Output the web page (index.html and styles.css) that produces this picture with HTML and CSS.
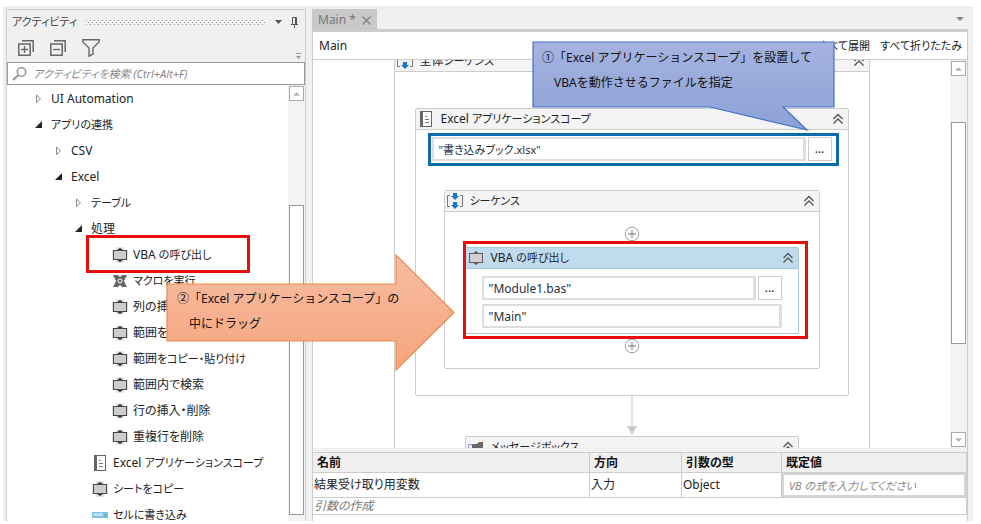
FILE: index.html
```html
<!DOCTYPE html>
<html lang="ja">
<head>
<meta charset="UTF-8">
<meta name="viewport" content="width=device-width, initial-scale=1.0">
<title>Main</title>
<link rel="stylesheet" href="styles.css">
</head>
<body>
<!-- アイコン -->
<svg class="defs" width="0" height="0" aria-hidden="true">
<symbol id="i-activity" viewBox="0 0 16 16">
<path d="M4 0h8v3h4v10h-4v3H4v-3H0V3h4z" fill="#e2e2e2"/>
<path d="M5 3L8 1l3 2zM5 13l3 2 3-2z" fill="#333"/>
<rect x="1.500" y="3.500" width="13" height="9" fill="#cdcdcd" stroke="#484848"/>
</symbol>
<symbol id="i-activity-line" viewBox="0 0 16 16">
<path d="M5.500 3L8 1l2.500 2zM5.500 13L8 15l2.500-2z" fill="#555"/>
<rect x="1.500" y="3.500" width="13" height="9" fill="#d3ccd0" stroke="#665a5e"/>
</symbol>
<symbol id="i-macro" viewBox="0 0 16 16">
<path d="M1 2h5l2 2 2-2h5l-3 6 3 6h-5l-2-2-2 2H1l3-6z" fill="#666"/>
<circle cx="8" cy="8" r="2" fill="#666" stroke="#fff"/>
</symbol>
<symbol id="i-book" viewBox="0 0 16 16">
<rect x="2.500" y=".5" width="11" height="15" fill="#fff" stroke="#666"/>
<path d="M2 0h3v16H2z" fill="#666"/>
<path d="M7 5.500h2M7 8.500h4M7 11.500h4" stroke="#777"/>
</symbol>
<symbol id="i-cell" viewBox="0 0 16 16">
<path d="M0 5h16v6H0z" fill="#7fc0e0"/>
<path d="M1 6h10v3H1z" fill="#b5e0f2"/>
<path d="M13 7v3" stroke="#5299bd"/>
</symbol>
<symbol id="i-sequence" viewBox="0 0 16 16">
<path d="M3 2.500H.5v11H3M13 2.500h2.500v11H13" fill="none" stroke="#777"/>
<path d="M6 0h4v3h2L8 7 4 3h2zM6 9h4v3h2l-4 4-4-4h2z" fill="#1c75c9"/>
</symbol>
<symbol id="i-message" viewBox="0 0 16 16">
<path d="M.5 5.500h6v7h-6z" fill="#e8edff" stroke="#8c9bd0"/>
<path d="M9 5l2-2h4v4z" fill="#c84863"/>
<path d="M4 5h5l1-1h5v10H4z" fill="#686868"/>
</symbol>
<symbol id="i-up" viewBox="0 0 12 12">
<path d="M1.500 6L6 1.500 10.500 6M1.500 10.500L6 6l4.500 4.500" fill="none" stroke="#555" stroke-width="1.400"/>
</symbol>
<symbol id="i-plus" viewBox="0 0 16 16">
<circle cx="8" cy="8" r="6.800" fill="#fff" stroke="#999"/>
<path d="M8 4v8M4 8h8" stroke="#999" stroke-width="1.300"/>
</symbol>
<symbol id="i-open" viewBox="0 0 8 8"><path d="M7 0v7H0z" fill="#222"/></symbol>
<symbol id="i-closed" viewBox="0 0 8 10"><path d="M1.500 1v7.500L5.500 4.800z" fill="#fff" stroke="#888"/></symbol>
<symbol id="i-tri-up" viewBox="0 0 8 4"><path d="M0 4l4-4 4 4z" fill="#aaa"/></symbol>
<symbol id="i-tri-down" viewBox="0 0 8 4"><path d="M0 0h8L4 4z" fill="#aaa"/></symbol>
</svg>

<div class="app">
<aside class="panel">
<div class="panel-title">
<span class="kana">アクティビティ</span>
<svg class="grip" height="5" aria-hidden="true">
<pattern id="dots" width="4" height="4" patternUnits="userSpaceOnUse"><path d="M0 0h1v1H0zM2 2h1v1H2z" fill="#999"/></pattern>
<rect width="100%" height="5" fill="url(#dots)"/>
</svg>
<button class="icon-btn" aria-label="メニュー"><svg width="7" height="4"><path d="M0 0h7L3.500 4z" fill="#555"/></svg></button>
<button class="icon-btn" aria-label="固定"><svg width="7" height="11"><path d="M1.500 7V.5h4V7M0 7.500h7M3.500 8v3M4.500 1v6" fill="none" stroke="#555"/></svg></button>
</div>
<div class="toolbar">
<button class="icon-btn" aria-label="すべて展開"><svg width="16" height="16"><path d="M4 .8h11.200V12M.8 4h11.400v11.200H.8z" fill="none" stroke="#666" stroke-width="1.500"/><path d="M3 9.500h7M6.500 6v7" stroke="#666" stroke-width="1.300"/></svg></button>
<button class="icon-btn" aria-label="すべて折りたたみ"><svg width="16" height="16"><path d="M4 .8h11.200V12M.8 4h11.400v11.200H.8z" fill="none" stroke="#666" stroke-width="1.500"/><path d="M3 9.500h7" stroke="#666" stroke-width="1.300"/></svg></button>
<button class="icon-btn" aria-label="フィルター"><svg width="18" height="18"><path d="M.8.8h16.400v2L11 9v6l-4 2.200V9L.8 2.800z" fill="none" stroke="#666" stroke-width="1.400"/></svg></button>
<button class="icon-btn overflow" aria-label="その他"><svg width="5" height="6"><path d="M0 .5h5" stroke="#999"/><path d="M0 3h5L2.500 6z" fill="#999"/></svg></button>
</div>
<label class="search">
<svg width="15" height="14"><circle cx="9.500" cy="5" r="4.200" fill="#fff" stroke="#999" stroke-width="1.600"/><path d="M6.500 8L1 13" stroke="#999" stroke-width="2.200"/></svg>
<input type="text" placeholder="アクティビティを検索 (Ctrl+Alt+F)" aria-label="アクティビティを検索">
</label>
<div class="tree-area">
<ul class="tree">
<li><div class="node"><button class="toggle" aria-label="展開"><svg width="8" height="10"><use href="#i-closed"/></svg></button>UI Automation</div></li>
<li><div class="node"><button class="toggle" aria-label="折りたたみ"><svg width="8" height="8"><use href="#i-open"/></svg></button><span class="kana">アプリの連携</span></div>
<ul>
<li><div class="node"><button class="toggle" aria-label="展開"><svg width="8" height="10"><use href="#i-closed"/></svg></button>CSV</div></li>
<li><div class="node"><button class="toggle" aria-label="折りたたみ"><svg width="8" height="8"><use href="#i-open"/></svg></button>Excel</div>
<ul>
<li><div class="node"><button class="toggle" aria-label="展開"><svg width="8" height="10"><use href="#i-closed"/></svg></button><span class="kana">テーブル</span></div></li>
<li><div class="node"><button class="toggle" aria-label="折りたたみ"><svg width="8" height="8"><use href="#i-open"/></svg></button>処理</div>
<ul>
<li><div class="node leaf"><svg class="icon"><use href="#i-activity"/></svg><span>VBA <span class="kana">の呼び出し</span></span></div></li>
<li><div class="node leaf"><svg class="icon"><use href="#i-macro"/></svg><span class="kana">マクロを実行</span></div></li>
<li><div class="node leaf"><svg class="icon"><use href="#i-activity"/></svg>列の挿入・削除</div></li>
<li><div class="node leaf"><svg class="icon"><use href="#i-activity"/></svg>範囲をクリア</div></li>
<li><div class="node leaf"><svg class="icon"><use href="#i-activity"/></svg><span>範囲<span class="kana">をコピー・貼り付け</span></span></div></li>
<li><div class="node leaf"><svg class="icon"><use href="#i-activity"/></svg>範囲内で検索</div></li>
<li><div class="node leaf"><svg class="icon"><use href="#i-activity"/></svg>行の挿入・削除</div></li>
<li><div class="node leaf"><svg class="icon"><use href="#i-activity"/></svg>重複行を削除</div></li>
</ul>
</li>
<li><div class="node leaf"><svg class="icon"><use href="#i-book"/></svg><span>Excel <span class="kana">アプリケーションスコープ</span></span></div></li>
<li><div class="node leaf"><svg class="icon"><use href="#i-activity"/></svg><span class="kana">シートをコピー</span></div></li>
<li><div class="node leaf"><svg class="icon"><use href="#i-cell"/></svg><span class="kana">セルに書き込み</span></div></li>
</ul>
</li>
</ul>
</li>
</ul>
<div class="scrollbar tree-scroll">
<button aria-label="上へ"><svg width="7" height="4" viewBox="0 0 8 4"><use href="#i-tri-up"/></svg></button>
<div class="thumb"></div>
</div>
</div>
</aside>

<main class="doc">
<div class="tabs">
<div class="tab">Main * <button class="icon-btn" aria-label="閉じる"><svg width="9" height="9"><path d="M.5.5l8 8M8.500.5l-8 8" stroke="#888" stroke-width="1.500"/></svg></button></div>
<button class="icon-btn" aria-label="タブ一覧"><svg width="8" height="4"><path d="M0 0h8L4 4z" fill="#888"/></svg></button>
</div>
<div class="doc-body">
<div class="crumbs">
<a href="#">Main</a>
<div class="crumb-links kana"><a href="#">すべて展開</a><a href="#">すべて折りたたみ</a></div>
</div>
<div class="canvas">
<div class="flow">
<section class="card outer">
<header><svg class="icon"><use href="#i-sequence"/></svg><span class="name">全体<span class="kana">シーケンス</span></span><button class="icon-btn" aria-label="折りたたみ"><svg width="12" height="12"><use href="#i-up"/></svg></button></header>
<section class="card scope">
<header><svg class="icon"><use href="#i-book"/></svg><span class="name">Excel <span class="kana">アプリケーションスコープ</span></span><button class="icon-btn" aria-label="折りたたみ"><svg width="12" height="12"><use href="#i-up"/></svg></button></header>
<div class="file-row">
<input class="expr kana" type="text" value="&quot;書き込みブック.xlsx&quot;" aria-label="ブックのパス">
<button class="browse">...</button>
</div>
<section class="card sequence">
<header><svg class="icon"><use href="#i-sequence"/></svg><span class="name kana">シーケンス</span><button class="icon-btn" aria-label="折りたたみ"><svg width="12" height="12"><use href="#i-up"/></svg></button></header>
<button class="icon-btn add" aria-label="追加"><svg width="16" height="16"><use href="#i-plus"/></svg></button>
<section class="card vba">
<header><svg class="icon"><use href="#i-activity-line"/></svg><span class="name">VBA <span class="kana">の呼び出し</span></span><button class="icon-btn" aria-label="折りたたみ"><svg width="12" height="12"><use href="#i-up"/></svg></button></header>
<div class="fields">
<div class="field-row">
<input class="expr" type="text" value="&quot;Module1.bas&quot;" aria-label="コードファイル">
<button class="browse">...</button>
</div>
<div class="field-row">
<input class="expr" type="text" value="&quot;Main&quot;" aria-label="エントリーメソッド">
</div>
</div>
<div class="mark mark-vba"></div>
</section>
<button class="icon-btn add" aria-label="追加"><svg width="16" height="16"><use href="#i-plus"/></svg></button>
</section>
</section>
<svg class="connector" width="10" height="40"><path d="M5 0v32" stroke="#e2e2e2" stroke-width="2"/><path d="M0 30h10L5 39z" fill="#ccc"/></svg>
<section class="card message">
<header><svg class="icon"><use href="#i-message"/></svg><span class="name kana">メッセージボックス</span><button class="icon-btn" aria-label="折りたたみ"><svg width="12" height="12"><use href="#i-up"/></svg></button></header>
</section>
</section>
</div>
<div class="scrollbar canvas-scroll">
<button aria-label="上へ"><svg width="7" height="4" viewBox="0 0 8 4"><use href="#i-tri-up"/></svg></button>
<div class="thumb"></div>
<button aria-label="下へ"><svg width="7" height="4" viewBox="0 0 8 4"><use href="#i-tri-down"/></svg></button>
</div>
</div>
<div class="arguments">
<table>
<thead>
<tr><th>名前</th><th class="col-dir">方向</th><th class="col-type">引数の型</th><th class="col-value">既定値</th></tr>
</thead>
<tbody>
<tr><td>結果受け取り用変数</td><td>入力</td><td>Object</td><td class="value"><input class="kana" type="text" placeholder="VB の式を入力してください" aria-label="既定値"></td></tr>
<tr class="create"><td colspan="4">引数の作成</td></tr>
</tbody>
</table>
</div>
</div>
</main>

<!-- 説明用の枠と吹き出し -->
<div class="mark mark-item"></div>
<div class="callout callout-file">
<svg width="304" height="92" viewBox="0 0 304 92">
<linearGradient id="blue" x2="0" y2="1"><stop offset="0" stop-color="#a5b3df"/><stop offset="1" stop-color="#8ca1d7"/></linearGradient>
<path d="M1 1h301v65h-51l24 23-97-23H1z" fill="url(#blue)" stroke="#4472c4" stroke-width="1.200"/>
</svg>
<p>①「Excel アプリケーションスコープ」を設置して<br><span>VBAを動作させるファイルを指定</span></p>
</div>
<div class="callout callout-drag">
<svg width="290" height="118" viewBox="0 0 290 118">
<linearGradient id="orange" x2="0" y2="1"><stop offset="0" stop-color="#f7bda4"/><stop offset="1" stop-color="#f6a47c"/></linearGradient>
<path d="M1 30h229V1l58 57.500L230 116V87H1z" fill="url(#orange)" stroke="#ed8b4a" stroke-width="1.200"/>
</svg>
<p>②「Excel アプリケーションスコープ」の<br><span>中にドラッグ</span></p>
</div>
</div>
</body>
</html>
```
FILE: styles.css
```css
* {
box-sizing: border-box;
}

body {
margin: 0;
background: #fff;
color: #222;
font-family: "Noto Sans", "Noto Sans CJK JP", sans-serif;
font-size: 12px;
line-height: 20px;
font-feature-settings: "palt";
}

ul {
list-style: none;
margin: 0;
padding: 0;
}

a {
color: inherit;
text-decoration: none;
}

button,
input {
font: inherit;
font-feature-settings: inherit;
color: inherit;
}

.defs {
position: absolute;
}

svg {
display: block;
flex: none;
}

.icon {
width: 16px;
height: 16px;
}

.icon-btn {
display: flex;
flex: none;
border: 0;
padding: 0;
background: none;
}

.app {
position: relative;
display: flex;
gap: 6px;
height: calc(100vh - 9px);
min-height: 500px;
margin: 6px 8px 3px 3px;
padding: 3px 5px 0 3px;
background: #f0f0f0;
}

/* アクティビティパネル */
.panel {
display: flex;
flex-direction: column;
flex: none;
width: 300px;
border: 1px solid #ccc;
border-bottom: 0;
}

.panel-title {
display: flex;
align-items: center;
gap: 9px;
height: 24px;
padding: 0 7px 0 5px;
color: #444;
}

.grip {
flex: 1;
width: 0;
}

.toolbar {
display: flex;
align-items: center;
gap: 16px;
height: 28px;
padding: 0 4px 0 11px;
}

.toolbar .overflow {
margin-left: auto;
align-self: flex-end;
margin-bottom: 3px;
}

.search {
display: flex;
align-items: center;
gap: 6px;
height: 23px;
padding-left: 4px;
border: 1px solid #999;
background: #fff;
}

.search input {
flex: 1;
min-width: 0;
height: 20px;
padding: 0;
border: 0;
outline: 0;
font-size: 11px;
}

input::placeholder {
color: #888;
font-style: italic;
}

.tree-area {
display: flex;
flex: 1;
min-height: 0;
background: #fff;
}

.tree {
flex: 1;
padding: 1px 0 0 28px;
overflow: hidden;
white-space: nowrap;
}

.tree ul {
padding-left: 20px;
}

.node {
display: flex;
align-items: center;
height: 26px;
}

.toggle {
width: 16px;
padding: 0;
border: 0;
background: none;
}

.leaf {
gap: 5px;
padding-left: 17px;
}

.scrollbar {
display: flex;
flex-direction: column;
flex: none;
width: 17px;
padding: 1px;
background: #f3f3f3;
}

.scrollbar button {
display: flex;
align-items: center;
justify-content: center;
width: 15px;
height: 15px;
padding: 0;
border: 1px solid #aaa;
background: #fff;
}

.thumb {
flex: 1;
width: 15px;
border: 1px solid #999;
background: #fff;
}

.tree-scroll .thumb {
margin: 104px 0 5px;
}

.canvas-scroll .thumb {
margin: 46px 0 88px;
}

/* ドキュメント */
.doc {
display: flex;
flex-direction: column;
flex: 1;
min-width: 0;
}

.tabs {
display: flex;
align-items: center;
justify-content: space-between;
height: 23px;
padding-right: 4px;
border-bottom: 3px solid #ccc;
}

.tab {
display: flex;
align-items: center;
gap: 6px;
height: 20px;
padding: 2px 6px 0 6px;
background: #c9c9c9;
color: #777;
}

.doc-body {
display: flex;
flex-direction: column;
flex: 1;
min-height: 0;
border: solid #ccc;
border-width: 0 1px;
background: #fff;
}

.crumbs {
display: flex;
align-items: center;
justify-content: space-between;
height: 28px;
padding: 0 5px 0 6px;
border-bottom: 1px solid #ccc;
}

.crumb-links {
display: flex;
gap: 10px;
}

.canvas {
display: flex;
flex: 1;
min-height: 0;
overflow: hidden;
}

.flow {
flex: 1;
overflow: hidden;
}

.card {
position: relative;
border: 1px solid #ccc;
border-radius: 2px;
background: #fff;
}

.card > header {
display: flex;
align-items: center;
height: 21px;
padding: 0 4px 0 2px;
border-bottom: 1px solid #ccc;
background: #f4f4f4;
}

.name {
flex: 1;
margin-left: 7px;
}

.outer {
max-width: 476px;
height: 600px;
margin: -10px auto 0;
}

.scope {
margin: 36px 20px 0;
padding-bottom: 26px;
}

.file-row {
display: flex;
gap: 2px;
margin: 3px 9px 0 12px;
padding: 1px 4px 2px 1px;
border: 3px solid #0d6cb0;
}

.expr {
flex: 1;
min-width: 0;
height: 24px;
padding: 0 5px;
border: 2px solid #ddd;
border-right-width: 3px;
background: #fff;
color: #1f2f40;
}

.browse {
width: 24px;
height: 24px;
padding: 0;
border: 1px solid #ccc;
background: #fff;
}

.sequence {
margin: 24px 28px 0;
padding-bottom: 14px;
}

.add {
width: 16px;
margin: 14px auto 5px;
}

.vba {
margin: 0 20px;
border-color: #a9c8dc;
}

.vba > header {
background: #c1dbee;
border-color: #a9c8dc;
}

.fields {
display: flex;
flex-direction: column;
gap: 4px;
padding: 7px 16px 5px 16px;
}

.field-row {
display: flex;
gap: 2px;
}

.vba + .add {
margin: 4px auto 0;
}

.connector {
margin: 0 auto;
}

.message {
margin: 0 70px;
}

/* 引数 */
.arguments {
flex: none;
height: 73px;
border-top: 4px solid #f0f0f0;
}

table {
width: 100%;
table-layout: fixed;
border-collapse: collapse;
}

th {
height: 20px;
padding: 0 4px;
border: 1px solid #ccc;
border-left-width: 0;
background: #f0f0f0;
color: #111;
text-align: left;
line-height: 19px;
}

td {
height: 25px;
padding: 0 1px;
border: 1px solid #ccc;
border-left-width: 0;
line-height: 16px;
}

.col-dir {
width: 92px;
}

.col-type {
width: 100px;
}

.col-value {
width: 185px;
}

.value {
padding: 0;
}

.value input {
display: block;
width: 100%;
height: 24px;
padding: 0 5px;
border: 2px solid #d5d5d5;
}

.create td {
height: 17px;
color: #777;
font-style: italic;
line-height: 16px;
}

/* かなの多いラベル */
.kana {
font-size: 11px;
}

/* 枠と吹き出し */
.mark {
position: absolute;
border: 3px solid #e80c0c;
pointer-events: none;
}

.mark-item {
left: 83px;
top: 229px;
width: 164px;
height: 38px;
}

.mark-vba {
top: -7px;
right: -10px;
bottom: -6px;
left: -3px;
}

.callout {
position: absolute;
color: #111;
line-height: 25px;
white-space: nowrap;
font-feature-settings: normal;
}

.callout p {
position: absolute;
top: 4px;
left: 10px;
margin: 0;
}

.callout span {
margin-left: 12px;
}

.callout-file {
left: 529px;
top: 35px;
}

.callout-drag {
left: 163px;
top: 248px;
}

.callout-drag p {
top: 32px;
left: 11px;
}
```
